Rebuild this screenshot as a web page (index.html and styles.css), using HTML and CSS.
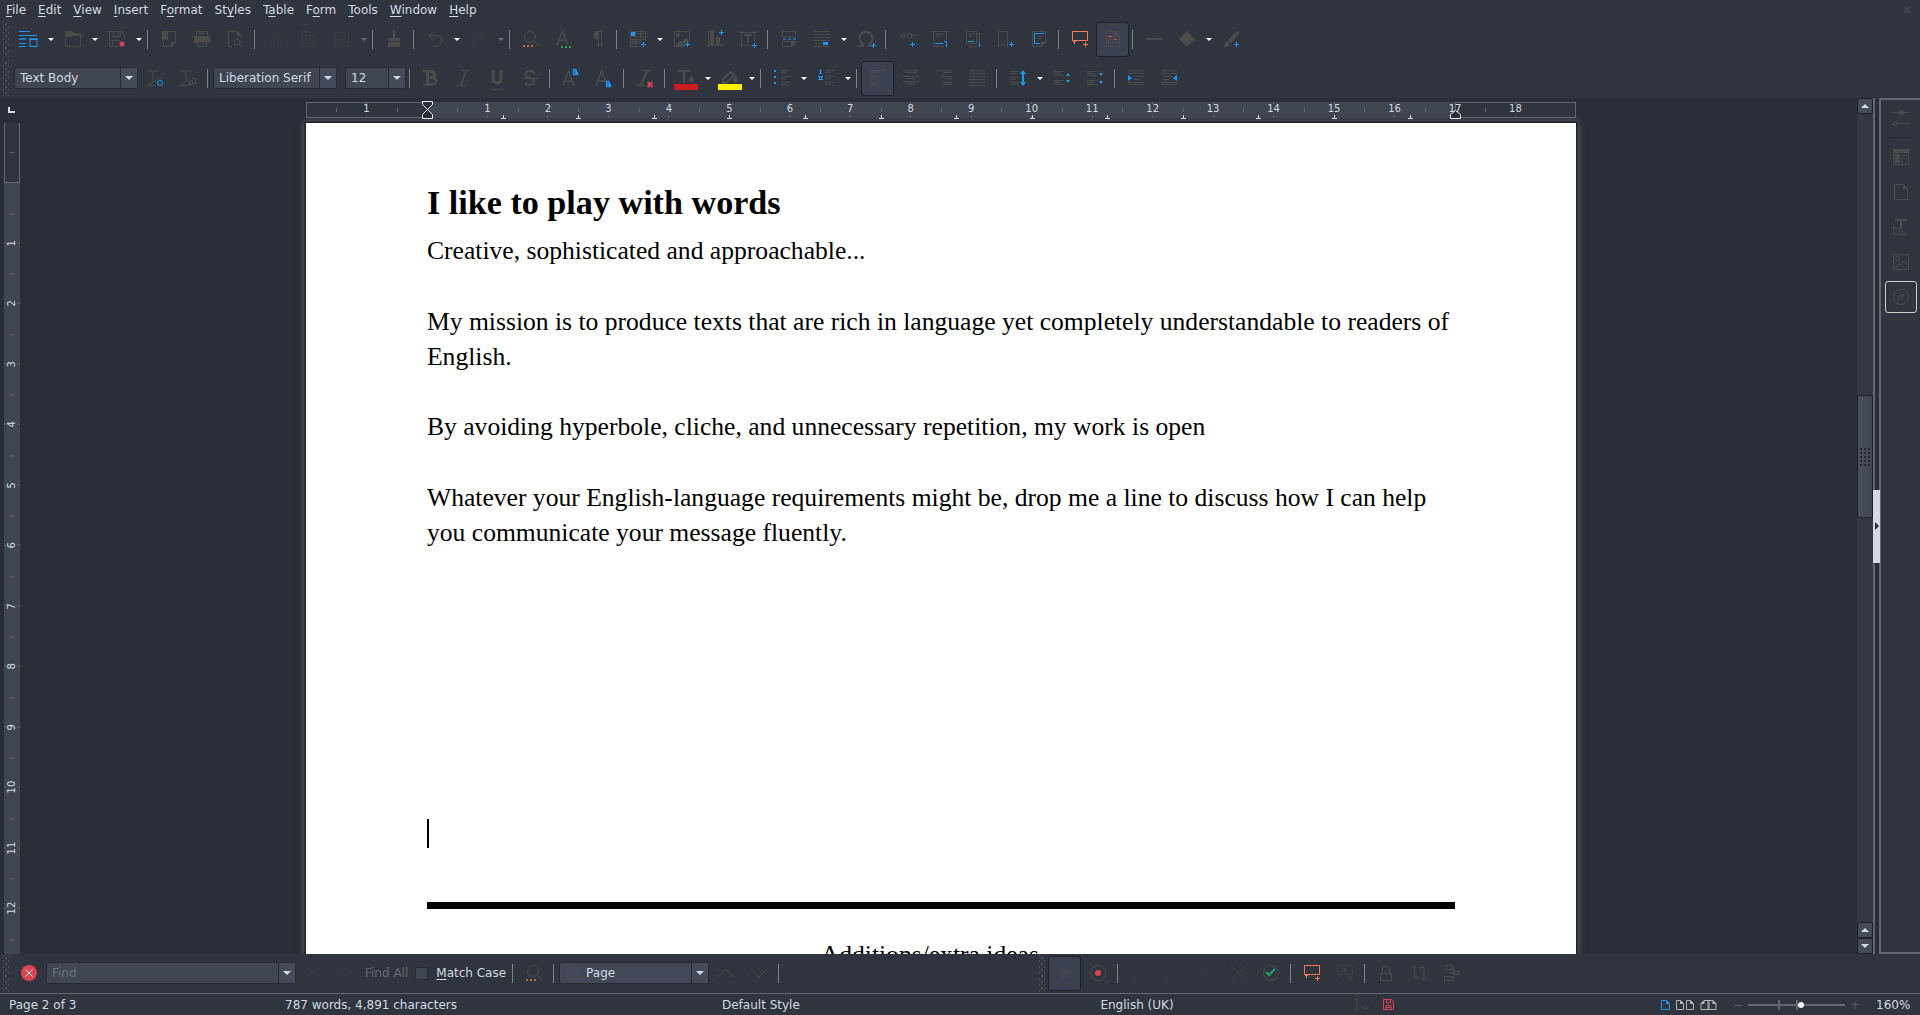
FILE: index.html
```html
<!DOCTYPE html>
<html lang="en-GB">
<head>
<meta charset="utf-8">
<title>Writer</title>
<link rel="stylesheet" href="styles.css">
</head>
<body>
<nav class="menubar">
  <button><u>F</u>ile</button><button><u>E</u>dit</button><button><u>V</u>iew</button><button><u>I</u>nsert</button><button>F<u>o</u>rmat</button><button>St<u>y</u>les</button><button>T<u>a</u>ble</button><button>F<u>o</u>rm</button><button><u>T</u>ools</button><button><u>W</u>indow</button><button><u>H</u>elp</button>
  <button class="close-doc" aria-label="Close document">×</button>
</nav>

<div class="toolbar">
  <i class="grip"></i>
  <button class="tb" aria-label="New"><svg class="wide b" viewBox="0 0 19 16"><path d="M0 .5h11M0 4.5h18M0 12.5h7M0 15.5h7M11 8.5h7v7h-7z"/><path stroke-width="2" opacity=".7" d="M0 8h7M10 8h9"/></svg></button><button class="dd" aria-label="New menu"></button>
  <button class="tb" aria-label="Open"><svg viewBox="0 0 16 16"><path d="M.5 15.5v-15h6l2 2h7v13z"/><path class="f" d="M0 0h7l2 2h7v3H7L5 6H0z"/></svg></button><button class="dd" aria-label="Open menu"></button>
  <button class="tb" aria-label="Save"><svg viewBox="0 0 16 16"><path d="M10 15.5H.5V.5h12l3 3V9M4.500 .5v5h7v-5M9.500 1v3M3.500 15V9.500h7"/><circle class="rf" cx="13" cy="13" r="2.500"/></svg></button><button class="dd" aria-label="Save menu"></button>
  <i class="sep"></i>
  <button class="tb" aria-label="Export as PDF"><svg viewBox="0 0 16 16"><path d="M5 .5h9.500v11l-4 4H2.500V12"/><path class="f" d="M1 0h6v10l-3-2-3 3zM10 11h5l-5 5z"/></svg></button>
  <button class="tb" aria-label="Print"><svg viewBox="0 0 16 16"><path d="M2.500 4V.5h11V4M5 2.500h6M3.500 10.500h9v5h-9zM6 12.500h5"/><path class="f" d="M0 5h16v7h-3v-2H3v2H0z"/></svg></button>
  <button class="tb" aria-label="Print preview"><svg viewBox="0 0 16 16"><path d="M5 15.500H1.500V.5h9l4 4V7"/><path class="f" d="M10 0l5 5h-5z"/><circle cx="10" cy="11" r="3"/><path d="M12 13l3 3"/></svg></button>
  <i class="sep"></i>
  <button class="tb dim" aria-label="Cut"><svg viewBox="0 0 16 16"><path d="M4 0l7 12M12 0L5 12"/><circle cx="4" cy="13.500" r="2"/><circle cx="12" cy="13.500" r="2"/></svg></button>
  <button class="tb dim" aria-label="Copy"><svg viewBox="0 0 16 16"><path d="M4 11.500H.5V.5h8V4M4.500 4.500h10v8l-3 3h-7z"/></svg></button>
  <button class="tb dim" aria-label="Paste"><svg viewBox="0 0 16 16"><path d="M3 2.500H1.500v13h13v-13H13M4.500 1.500h7v3h-7zM4 8.500h8M4 10.500h6M4 12.500h4"/></svg></button><button class="dd off" aria-label="Paste menu"></button>
  <i class="sep"></i>
  <button class="tb" aria-label="Clone formatting"><svg viewBox="0 0 16 16"><path class="f" d="M7 0h2v7h5v3H2V7h5zM2 11h12v5H0c2 0 2-3 2-5z"/></svg></button>
  <i class="sep"></i>
  <button class="tb" aria-label="Undo"><svg viewBox="0 0 16 16"><path d="M6 .5l-4 4 4 4M2 4.500h7a5.500 5.500 0 010 11H6"/></svg></button><button class="dd" aria-label="Undo menu"></button>
  <button class="tb dim" aria-label="Redo"><svg viewBox="0 0 16 16"><path d="M10 .5l4 4-4 4M14 4.500H7a5.500 5.500 0 000 11h3"/></svg></button><button class="dd off" aria-label="Redo menu"></button>
  <i class="sep"></i>
  <button class="tb" aria-label="Find and replace"><svg viewBox="0 0 16 16"><circle cx="7" cy="6" r="5.500"/><path d="M11 10l5 5"/><path class="o" stroke-width="2" stroke-dasharray="2 2" d="M0 15h10"/></svg></button>
  <button class="tb" aria-label="Spelling"><svg viewBox="0 0 16 16"><path stroke-width="1.500" d="M1 14L6.500 .5 12 14M3 9.500h7"/><path class="g" stroke-width="2" stroke-dasharray="2 2" d="M5 16h10"/></svg></button>
  <button class="tb" aria-label="Formatting marks"><svg viewBox="0 0 16 16"><path class="f" d="M8 0h5v16h-1V1h-2v15H9V9a4.500 4.500 0 010-9z"/></svg></button>
  <i class="sep"></i>
  <button class="tb" aria-label="Insert table"><svg viewBox="0 0 16 16"><path d="M11 15.500H.5V.5h15V10M0 5.500h15M0 10.500h12M5.500 0v15M10.500 0v10M6 2.500h10M1 12.500h9M0 8.500h16"/><path class="bf" d="M1 1h4v4H1z"/><path class="b" d="M13.500 11v5M11 13.500h5"/></svg></button><button class="dd" aria-label="Table menu"></button>
  <button class="tb" aria-label="Insert image"><svg viewBox="0 0 16 16"><path d="M10 15.500H.5V.5h15V10"/><circle class="f" cx="4" cy="4" r="2"/><path class="f" d="M1 15l5-5 2 1 4-4 3 3v1h-4v4z"/><path class="b" d="M13.500 11v5M11 13.500h5"/></svg></button>
  <button class="tb" aria-label="Insert chart"><svg viewBox="0 0 16 16"><path d="M0 14.500h16M1.500 0v16"/><path class="f" d="M3 0h4v14H3zM9 6h4v8H9z"/><path class="b" d="M14.500-1v5M12 1.500h5"/></svg></button>
  <button class="tb" aria-label="Insert text box"><svg viewBox="0 0 16 16"><path d="M0 1.500h16M1.500 0v16M14.500 0v10M0 14.500h10"/><path stroke-width="2" d="M4 4h8M8 4v8"/><path class="b" d="M14.500 12v5M12 14.500h5"/></svg></button>
  <i class="sep"></i>
  <button class="tb" aria-label="Page break"><svg viewBox="0 0 16 16"><path d="M1.500 0v5.500h13V.5h-13M1.500 15.500v-5h13v2l-3 3z"/><path class="f" d="M10 11h5l-5 5z"/><path class="b" stroke-dasharray="3 2" d="M2 8h13"/></svg></button>
  <button class="tb" aria-label="Insert field"><svg viewBox="0 0 16 16"><path d="M0 .5h16M0 3.500h16M0 6.500h16M0 9.500h16M0 12.500h8M0 15.500h16"/><path class="bf" d="M9 11h5v3H9z"/></svg></button><button class="dd" aria-label="Field menu"></button>
  <button class="tb" aria-label="Special character"><svg viewBox="0 0 16 16"><path stroke-width="2" d="M0 15h5v-2a6.500 6.500 0 116 0v2h2"/><path class="b" d="M15.500 12v5M13 14.500h5"/></svg></button>
  <i class="sep"></i>
  <button class="tb" aria-label="Hyperlink"><svg viewBox="0 0 16 16"><path d="M0 4.500h3M6 2.500H3.500v4H6M5 4.500h6M9 2.500h3.500v4H9M13 4.500h3"/><path class="b" d="M13.500 11v5M11 13.500h5"/></svg></button>
  <button class="tb" aria-label="Footnote"><svg viewBox="0 0 16 16"><path d="M12 15.500H1.500V.5h13V9M4 3.500h8M4 5.500h4M4 15h2"/><path class="b" d="M3 12.500h8M12 10.500h2.500V16"/></svg></button>
  <button class="tb" aria-label="Endnote"><svg viewBox="0 0 16 16"><path d="M1.500 .5h10v12h-10zM12 2.500h2.500V9M4 3.500h5M4 5.500h3M4 15.500h8"/><path class="b" d="M3 10.500h6M14.500 10v1M14.500 12v4"/></svg></button>
  <button class="tb" aria-label="Bookmark"><svg viewBox="0 0 16 16"><path d="M.5 15.500V.5h9v15L5 13z"/><path class="b" d="M13.500 11v5M11 13.500h5"/></svg></button>
  <button class="tb" aria-label="Cross-reference"><svg viewBox="0 0 16 16"><path d="M1.500 .5h13v11l-4 4h-9zM6 5.500h6M6 7.500h4"/><path class="b" d="M13 2.500H3.500v10H9"/><path class="f" d="M10 11h5l-5 5z"/></svg></button>
  <i class="sep"></i>
  <button class="tb" aria-label="Insert comment"><svg viewBox="0 0 16 16"><path class="o2" d="M.5 .5h15v9h-15zM2.500 10v3M1 10.500h3M13.500 11v5M11 13.500h5"/></svg></button>
  <button class="tb on" aria-label="Track changes"><svg viewBox="0 0 16 16"><path d="M1.500 .5h9l4 4v11h-13zM4 8.500h5M7 11.500h5"/><path class="f" d="M9 0l6 5H9z"/><path class="r" d="M3 5.500h4M9 8.500h3M3 11.500h1"/></svg></button>
  <i class="sep"></i>
  <button class="tb" aria-label="Line"><svg viewBox="0 0 16 16"><path stroke-width="2" d="M0 8h16"/></svg></button>
  <button class="tb" aria-label="Basic shapes"><svg viewBox="0 0 16 16"><path class="f" d="M8 0l8 8-8 8-8-8z"/></svg></button><button class="dd" aria-label="Shapes menu"></button>
  <button class="tb" aria-label="Show draw functions"><svg viewBox="0 0 16 16"><path class="f" d="M16 0v3l-8 9-3-3 8-8zM4 10l3 3c-1 3-4 3-7 3 2-1 1-5 4-6z"/><path class="b" d="M13.500 11v5M11 13.500h5"/></svg></button>
</div>

<div class="toolbar">
  <i class="grip"></i>
  <span class="combo style"><select aria-label="Paragraph style"><option>Text Body</option></select></span>
  <button class="tb" aria-label="Update style"><svg viewBox="0 0 16 16"><path d="M0 1h12M6 1v10M0 15.500h9M1 15L15 7"/><circle class="b" cx="13" cy="13" r="2.500"/></svg></button>
  <button class="tb" aria-label="New style"><svg viewBox="0 0 16 16"><path d="M0 1h12M6 1v10M0 15.500h9M1 15l8-6M9.500 10.500h3v4h-3zM12 8.500h3.500v5H13"/></svg></button>
  <i class="sep"></i>
  <span class="combo font"><select aria-label="Font name"><option>Liberation Serif</option></select></span>
  <span class="combo size"><select aria-label="Font size"><option>12</option></select></span>
  <i class="sep"></i>
  <button class="tb" aria-label="Bold"><svg viewBox="0 0 16 16"><path stroke-width="3" d="M4 1.500h4.500a2.800 2.800 0 010 6H5h4.500a3.300 3.300 0 010 7H4M4.500 1v13"/><path stroke-width="2" d="M0 1h5M0 15h5"/></svg></button>
  <button class="tb" aria-label="Italic"><svg viewBox="0 0 16 16"><path d="M6 .5h8M1 15.500h8"/><path stroke-width="1.500" d="M10 1L5 15"/></svg></button>
  <button class="tb" aria-label="Underline"><svg viewBox="0 0 16 16"><path stroke-width="3" d="M4 0v8q0 5 4 5t4-5V0"/><path d="M1 19.500h14"/></svg></button>
  <button class="tb" aria-label="Strikethrough"><svg viewBox="0 0 16 16"><path stroke-width="2" d="M12 4V2Q8 0 5 2T5 7l6 2q2 2 0 5-4 2-7 0v-2"/><path d="M0 8.500h16"/></svg></button>
  <i class="sep"></i>
  <button class="tb" aria-label="Superscript"><svg viewBox="0 0 16 16"><path stroke-width="1.500" d="M0 15.500L5.500 1 11 15.500M2 11h7"/><path class="b" d="M10.500-.5H13v5h-2.500zM13 2.500h1.500v2H13M10 2h4" stroke-width="1.300"/></svg></button>
  <button class="tb" aria-label="Subscript"><svg viewBox="0 0 16 16"><path stroke-width="1.500" d="M0 15.500L5.500 1 10 12M2 11h7"/><path class="b" d="M10.500 11.500H13v5h-2.500zM13 14.500h1.500v2H13M10 14h4" stroke-width="1.300"/></svg></button>
  <i class="sep"></i>
  <button class="tb" aria-label="Clear formatting"><svg viewBox="0 0 16 16"><path d="M4 .5h10M0 15.500h8"/><path stroke-width="2" d="M10 1L4 15"/><path class="r" stroke-width="2" d="M10.500 12l5 5M15.500 12l-5 5"/></svg></button>
  <i class="sep"></i>
  <button class="tb" aria-label="Font colour"><svg class="tall" viewBox="0 0 24 20"><path stroke-width="2" d="M4 1h12M10 1v12"/><path class="f" d="M17.500 5l2.500 5a2.500 2.500 0 11-5 0z"/><path fill="#cc1a1f" stroke="none" d="M0 14h24v6H0z"/></svg></button><button class="dd" aria-label="Font colour menu"></button>
  <button class="tb" aria-label="Highlighting"><svg class="tall" viewBox="0 0 24 20"><path stroke-width="2" d="M5 9l8-7 3 3-8 8H5z"/><path class="f" d="M17.500 5l2.500 5a2.500 2.500 0 11-5 0z"/><path fill="#fff200" stroke="none" d="M0 14h24v6H0z"/></svg></button><button class="dd" aria-label="Highlighting menu"></button>
  <i class="sep"></i>
  <button class="tb" aria-label="Bullets"><svg viewBox="0 0 16 16"><path d="M7 .5h9M7 2.500h6M7 6.500h9M7 8.500h5M7 12.500h9M7 14.500h6M14 15.500h2"/><path class="bf" d="M0 0h2v2H0zM0 6h2v2H0zM0 12h2v2H0z"/></svg></button><button class="dd" aria-label="Bullets menu"></button>
  <button class="tb" aria-label="Numbering"><svg viewBox="0 0 16 16"><path d="M7 .5h9M7 2.500h6M7 6.500h9M7 8.500h5M7 12.500h9M7 14.500h6M14 15.500h2"/><path class="b" d="M1 .5h3M2.500 0v4M1 3.500h3M0 6.500h5M1.500 6v4M3.500 6v4M0 9.500h5"/></svg></button><button class="dd" aria-label="Numbering menu"></button>
  <i class="sep"></i>
  <button class="tb on" aria-label="Align left"><svg viewBox="0 0 16 16"><path d="M0 .5h16M0 2.500h9M0 6.500h10M0 8.500h6M0 12.500h10M0 14.500h7M8 15.500h2"/></svg></button>
  <button class="tb" aria-label="Centre"><svg viewBox="0 0 16 16"><path d="M0 .5h16M2 2.500h12M0 6.500h16M4 8.500h8M0 11.500h16M4 13.500h8M7 15.500h2"/></svg></button>
  <button class="tb" aria-label="Align right"><svg viewBox="0 0 16 16"><path d="M0 .5h16M7 2.500h9M6 6.500h10M10 8.500h6M6 12.500h10M9 14.500h7M7 15.500h2"/></svg></button>
  <button class="tb" aria-label="Justify"><svg viewBox="0 0 16 16"><path d="M0 .5h16M0 3.500h16M0 6.500h16M0 9.500h16M0 12.500h16M0 15.500h16"/></svg></button>
  <i class="sep"></i>
  <button class="tb" aria-label="Line spacing"><svg viewBox="0 0 16 16"><path d="M0 1.500h9M0 3.500h7M0 7.500h9M0 9.500h6M0 12.500h9M0 14.500h7"/><path class="bf" d="M13 0l3 4h-2v8h2l-3 4-3-4h2V4h-2z"/></svg></button><button class="dd" aria-label="Line spacing menu"></button>
  <button class="tb" aria-label="Increase paragraph spacing"><svg viewBox="0 0 16 16"><path d="M0 1.500h10M0 3.500h7M0 5.500h10M0 10.500h10M0 12.500h7M0 14.500h11"/><path class="bf" d="M14 3l2 3h-4zM12 10h4l-2 3z"/></svg></button>
  <button class="tb" aria-label="Decrease paragraph spacing"><svg viewBox="0 0 16 16"><path d="M0 1.500h10M0 3.500h7M0 5.500h10M0 10.500h10M0 12.500h7M0 14.500h11"/><path class="bf" d="M12 3h4l-2 3zM14 10l2 3h-4z"/></svg></button>
  <i class="sep"></i>
  <button class="tb" aria-label="Increase indent"><svg viewBox="0 0 16 16"><path d="M0 .5h16M0 3.500h16M6 6.500h10M6 9.500h6M0 12.500h16M0 14.500h16"/><path class="bf" d="M0 5l4 3-4 3z"/></svg></button>
  <button class="tb" aria-label="Decrease indent"><svg viewBox="0 0 16 16"><path d="M0 .5h16M0 3.500h16M2 6.500h10M2 9.500h6M0 12.500h16M0 14.500h16"/><path class="bf" d="M16 5l-4 3 4 3z"/></svg></button>
</div>

<main class="workspace">
  <div class="left">
    <i class="corner"></i>
    <div class="vruler"><div class="vmargin"></div>
      <ol class="vmarks"><li>1</li><li>2</li><li>3</li><li>4</li><li>5</li><li>6</li><li>7</li><li>8</li><li>9</li><li>10</li><li>11</li><li>12</li><li></li></ol>
    </div>
  </div>
  <section class="desk">
    <div class="hruler">
      <i class="hmargin"></i><i class="hbody"></i><i class="hmargin end"></i>
      <ol class="hmarks"><li>1</li><li class="zero"></li><li>1</li><li>2</li><li>3</li><li>4</li><li>5</li><li>6</li><li>7</li><li>8</li><li>9</li><li>10</li><li>11</li><li>12</li><li>13</li><li>14</li><li>15</li><li>16</li><li>17</li><li>18</li></ol>
      <div class="tabs"><i></i><i></i><i></i><i></i><i></i><i></i><i></i><i></i><i></i><i></i><i></i><i></i><i></i></div>
      <svg class="indent first" viewBox="0 0 11 18"><path d="M.5 .5h10v3l-5 5 5 5v4H.5v-4l5-5-5-5z"/></svg>
      <svg class="indent last" viewBox="0 0 11 18"><path d="M5.500 9.500l5 4v4H.5v-4z"/></svg>
    </div>
    <article class="page">
      <h1>I like to play with words</h1>
      <p>Creative, sophisticated and approachable...</p>
      <p>My mission is to produce texts that are rich in language yet completely understandable to readers of English.</p>
      <p>By avoiding hyperbole, cliche, and unnecessary repetition, my work is open</p>
      <p>Whatever your English-language requirements might be, drop me a line to discuss how I can help you communicate your message fluently.</p>
      <div class="caret"></div>
      <hr>
      <p class="ideas">Additions/extra ideas</p>
    </article>
  </section>
  <div class="scrollbar">
    <button class="up" aria-label="Scroll up"></button>
    <div class="track"><i class="before"></i><i class="thumb"></i><i class="after"></i></div>
    <button class="up" aria-label="Previous"></button>
    <button class="down" aria-label="Next"></button>
  </div>
  <div class="splitter"><button aria-label="Hide sidebar"></button></div>
  <aside class="sidebar">
    <button aria-label="Sidebar settings"><svg viewBox="0 0 16 16"><path d="M0 2.500h16M5 13.500h11"/><circle class="f" cx="8.500" cy="2.500" r="2.500"/><circle cx="2.500" cy="13.500" r="2"/></svg></button>
    <i class="rule"></i>
    <button aria-label="Properties"><svg viewBox="0 0 16 16"><path d="M.5 .5h15v15H.5zM8 6.500h6M8 9.500h4M8 12.500h2"/><path class="f" d="M0 0h16v4H0zM2 5h5v9H2z"/></svg></button>
    <button aria-label="Page"><svg viewBox="0 0 16 16"><path d="M1.500 .5h9l4 4v11h-13z"/><path class="f" d="M10 0l5 5h-5z"/></svg></button>
    <button aria-label="Styles"><svg viewBox="0 0 16 16"><path stroke-width="2" d="M2 1h12M8 1v9"/><path d="M.5 7.500v8H14z"/></svg></button>
    <button aria-label="Gallery"><svg viewBox="0 0 16 16"><path d="M.5 .5h15v15H.5zM2 14l4-4 2 1 3-4 3 3"/><circle cx="4.500" cy="4.500" r="2"/></svg></button>
    <button class="focus" aria-label="Navigator"><svg viewBox="0 0 16 16"><circle cx="8" cy="8" r="7.500"/><path d="M11 5L9.500 9.500 5 11l1.500-4.500z"/></svg></button>
  </aside>
</main>

<div class="toolbar findbar">
  <i class="grip"></i>
  <button class="close-find" aria-label="Close find bar"><svg viewBox="0 0 16 16"><circle cx="8" cy="8" r="8" fill="#da4453" stroke="none"/><path stroke="#fff" d="M4.500 4.500l7 7M11.500 4.500l-7 7"/></svg></button>
  <span class="combo find"><input type="text" placeholder="Find" aria-label="Find"></span>
  <button class="tb dim" aria-label="Find previous"><svg viewBox="0 0 16 16"><path d="M2 11l6-6 6 6"/></svg></button>
  <button class="tb dim" aria-label="Find next"><svg viewBox="0 0 16 16"><path d="M2 5l6 6 6-6"/></svg></button>
  <button class="findall" disabled>Find All</button>
  <label class="match"><input type="checkbox"><span><u>M</u>atch Case</span></label>
  <i class="sep"></i>
  <button class="tb" aria-label="Find and replace"><svg viewBox="0 0 16 16"><circle cx="7" cy="6" r="5.500"/><path d="M11 10l5 5"/><path class="o" stroke-width="2" stroke-dasharray="2 2" d="M0 15h10"/></svg></button>
  <i class="sep"></i>
  <span class="combo nav"><svg viewBox="0 0 16 16"><path d="M3.500 2.500h6l3 3v8h-9z"/></svg><select aria-label="Navigate by"><option>Page</option></select></span>
  <button class="tb" aria-label="Previous page"><svg viewBox="0 0 16 16"><path d="M0 12l8-8 8 8"/></svg></button>
  <button class="tb" aria-label="Next page"><svg viewBox="0 0 16 16"><path d="M0 4l8 8 8-8"/></svg></button>
  <i class="sep"></i>
  <div class="changes">
    <i class="grip"></i>
    <button class="tb on" aria-label="Show changes"><svg viewBox="0 0 16 16"><path d="M0 9q8-9 16 0"/><circle cx="8" cy="9" r="3.500"/><circle cx="8" cy="9" r="1"/></svg></button>
    <button class="tb" aria-label="Record changes"><svg viewBox="0 0 16 16"><circle cx="8" cy="8" r="7.500"/><circle class="rf" cx="8" cy="8" r="3"/></svg></button>
    <i class="sep"></i>
    <button class="tb dim" aria-label="Previous change"><svg viewBox="0 0 16 16"><path d="M5 2L2 5M2 11l3 3"/></svg></button>
    <button class="tb dim" aria-label="Next change"><svg viewBox="0 0 16 16"><path d="M1 2l3 3M4 11l-3 3"/></svg></button>
    <button class="tb dim" aria-label="Accept change"><svg viewBox="0 0 16 16"><path d="M3 13l10-10"/></svg></button>
    <button class="tb off" aria-label="Reject change"><svg viewBox="0 0 16 16"><path d="M1 1l14 14M15 1L1 15"/></svg></button>
    <button class="tb" aria-label="Manage changes"><svg viewBox="0 0 16 16"><circle cx="8" cy="8" r="7.500"/><path class="g" stroke-width="2" d="M3 7l3 3 6-6"/></svg></button>
    <i class="sep"></i>
    <button class="tb" aria-label="Insert comment"><svg viewBox="0 0 16 16"><path class="o2" d="M.5 .5h15v9h-15zM2.500 10v3M1 10.500h3M13.500 11v5M11 13.500h5"/></svg></button>
    <button class="tb off" aria-label="Comment on change"><svg viewBox="0 0 16 16"><path d="M.5 .5h15v9h-15zM2.500 10v3M13.500 11v5M11 13.500h5"/><circle class="f" cx="8" cy="5" r="2"/></svg></button>
    <i class="sep"></i>
    <button class="tb" aria-label="Protect changes"><svg viewBox="0 0 16 16"><path d="M2.500 8.500h11v7h-11zM4.500 8V4q0-3 3.500-3t3.500 3v4"/></svg></button>
    <button class="tb" aria-label="Compare document"><svg viewBox="0 0 16 16"><circle cx="3.500" cy="2" r="1.500"/><circle cx="13" cy="14" r="1.500"/><path d="M3.500 4v9h4M6 11l2 2-2 2M13 12V2.500H9M11 .5l-2 2 2 2"/></svg></button>
    <button class="tb" aria-label="Merge document"><svg viewBox="0 0 16 16"><path d="M.5 .5h8v4h-8M.5 11.500h8v4h-8zM9 2.500h1v11H9M5 8h5M9.500 6.500h6v3h-6z"/></svg></button>
  </div>
</div>

<footer class="status">
  <span>Page 2 of 3</span>
  <span>787 words, 4,891 characters</span>
  <span>Default Style</span>
  <span class="mid">English (UK)</span>
  <span></span>
  <span class="icon"><svg viewBox="0 0 16 12"><path d="M0 .5h5M2.500 0v11M0 11.500h5M8.500 8v2.500h6V8"/></svg></span>
  <span class="icon"><svg viewBox="0 0 11 11"><path class="r" d="M.5 .5h8l2 2v8H.5zM3.500 1v3h4V1M3 10V6.500h5V10M3 8.500h5"/></svg></span>
  <span></span>
  <span></span>
  <span class="views">
    <svg viewBox="0 0 9 10"><path class="b" d="M.5 .5h5l3 3v6h-8z"/><path class="bf" d="M5 0l4 4H5z"/></svg>
    <svg class="two" viewBox="0 0 18 10"><path d="M.5 .5h4l3 3v6h-7zM10.500 .5h4l3 3v6h-7z"/><path class="lf" d="M4 0l4 4H4zM14 0l4 4h-4z"/></svg>
    <svg class="two" viewBox="0 0 17 10"><path d="M3.500 .5L.5 3.500v6h15v-6l-3-3zM7.500 0v10M8.500 0v10"/><path class="lf" d="M4 0v4H0zM12 0l4 4h-4z"/></svg>
  </span>
  <span class="zoomctl"><button aria-label="Zoom out">−</button><input type="range" min="0" max="100" value="55" aria-label="Zoom"><button aria-label="Zoom in">+</button></span>
  <span>160%</span>
</footer>
</body>
</html>
```
FILE: styles.css
```css
:root {
  --bg: #2f343f;
  --desk: #292d37;
  --field: #404552;
  --edge: #252932;
  --line: #626771;
  --text: #d3dae3;
  --icon: #4b4b4a;
  --blue: #1e97ef;
}

* { box-sizing: border-box; }

body {
  margin: 0;
  height: 100vh;
  display: flex;
  flex-direction: column;
  overflow: hidden;
  background: var(--bg);
  color: var(--text);
  font: 12px/16px "DejaVu Sans", sans-serif;
}

button, input, select {
  font: inherit;
  color: inherit;
  background: none;
  border: 0;
  padding: 0;
  margin: 0;
  outline: 0;
}

ol { list-style: none; margin: 0; padding: 0; }
i { display: block; flex: none; }
u { text-underline-offset: 2px; }

svg {
  display: block;
  flex: none;
  width: 16px;
  height: 16px;
  overflow: visible;
  fill: none;
  stroke: var(--icon);
}
svg.wide { width: 19px; }
svg.tall { width: 24px; height: 20px; margin-top: 4px; }
svg.b, svg .b { stroke: var(--blue); }
svg .f { fill: var(--icon); stroke: none; }
svg .bf { fill: var(--blue); stroke: none; }
svg .rf { fill: #da4453; stroke: none; }
svg .lf { fill: #b4b4b3; stroke: none; }
svg .r { stroke: #da4453; }
svg .o { stroke: #c0634c; }
svg .o2 { stroke: #f67b52; }
svg .g { stroke: #27a35d; }

/* menus */
.menubar { display: flex; gap: 12px; height: 20px; padding-left: 6px; flex: none; align-items: center; }
.menubar .close-doc { margin-left: auto; padding-right: 8px; color: #484c56; }

/* toolbars */
.toolbar { display: flex; align-items: center; height: 39px; padding: 0 0 1px 3px; flex: none; }
.grip {
  width: 6px;
  height: 36px;
  margin-right: 3px;
  background:
    radial-gradient(circle, #4b505b 1px, transparent 1px) 0 0 / 6px 6px,
    radial-gradient(circle, #4b505b 1px, transparent 1px) 3px 3px / 6px 6px;
}
.tb { display: flex; align-items: center; justify-content: center; flex: none; width: 33px; height: 35px; }
.tb.dim svg { opacity: .3; }
.tb.off svg { opacity: .6; }
.tb.on { border: 1px solid #1d2027; border-radius: 3px; background: #3b4150; }
.dd { display: grid; place-items: center; flex: none; width: 11px; height: 35px; }
.dd::after { content: ""; border: 3px solid transparent; border-top-color: #fff; border-bottom: 0; }
.dd.off::after { border-top-color: #686c75; }
.sep { width: 1px; height: 19px; margin: 0 4px 0 3px; background: #7d8189; }

.combo {
  display: flex;
  align-items: center;
  flex: none;
  position: relative;
  height: 22px;
  border: 1px solid var(--edge);
  border-radius: 3px;
  background: var(--field);
}
.combo select, .combo input { appearance: none; flex: 1; min-width: 0; height: 20px; padding: 0 20px 0 5px; }
.combo::after {
  content: "";
  position: absolute;
  inset: 0 0 0 auto;
  width: 16px;
  border-left: 1px solid var(--edge);
  background: #444a5a;
  pointer-events: none;
}
.combo::before {
  content: "";
  position: absolute;
  right: 4px;
  top: 8px;
  z-index: 1;
  border: 4px solid transparent;
  border-top-color: var(--text);
  border-bottom: 0;
  pointer-events: none;
}
.combo.style { width: 124px; margin-left: 2px; }
.combo.font { width: 124px; margin: 0 8px 0 1px; }
.combo.size { width: 61px; }
.combo.find { width: 250px; margin-left: 9px; }
.combo.find input::placeholder { color: #6c717b; opacity: 1; }
.combo.nav { width: 150px; padding-left: 4px; background: #424857; margin-left: 1px; }
.combo.nav select { padding-left: 6px; }

/* workspace */
.workspace { flex: 1; min-height: 0; display: flex; background: var(--desk); }
.left { width: 25px; flex: none; display: flex; flex-direction: column; padding-left: 4px; }
.corner { width: 7px; height: 6px; border: solid var(--text); border-width: 0 0 2px 2px; margin: 9px 4px 10px; }
.vruler { flex: 1; min-height: 0; overflow: hidden; width: 16px; background: var(--field); }
.vmargin {
  height: 60px;
  border: 1px solid var(--line);
  border-top: 0;
  background: linear-gradient(var(--line), var(--line)) 50% 29px / 4px 1px no-repeat, var(--bg);
}
.vmarks { height: 786px; margin-top: 30px; display: grid; grid-template-rows: repeat(13, 1fr); }
.vmarks li {
  display: flex;
  align-items: center;
  justify-content: center;
  writing-mode: vertical-rl;
  transform: rotate(180deg);
  font-size: 10px;
  line-height: 16px;
  background:
    linear-gradient(var(--line), var(--line)) 0 50% / 2px 1px no-repeat,
    linear-gradient(var(--line), var(--line)) 100% 50% / 2px 1px no-repeat,
    linear-gradient(var(--line), var(--line)) 50% 100% / 4px 1px no-repeat;
}

.desk { flex: 1; min-width: 0; display: flex; flex-direction: column; align-items: center; overflow: hidden; }
.hruler { position: relative; flex: none; display: flex; width: calc(21cm * 1.6); height: 16px; margin: 4px 0 5px; }
.hmargin { width: calc(2cm * 1.6); border: 1px solid var(--line); border-right: 0; background: var(--bg); }
.hmargin.end { border: 1px solid var(--line); }
.hbody { flex: 1; background: var(--field); }
.hmarks {
  position: absolute;
  inset: 0;
  display: grid;
  grid-template-columns: repeat(20, 1fr);
  padding: 0 calc(100% / 42);
  font-size: 10px;
  line-height: 14px;
  text-align: center;
}
.hmarks li {
  background:
    linear-gradient(var(--line), var(--line)) 50% 0 / 1px 2px no-repeat,
    linear-gradient(var(--line), var(--line)) 50% 100% / 1px 2px no-repeat,
    linear-gradient(var(--line), var(--line)) 0 50% / 1px 4px no-repeat;
}
.tabs {
  position: absolute;
  bottom: -1px;
  left: calc(2cm * 1.6);
  width: calc(16.25cm * 1.6);
  display: grid;
  grid-template-columns: repeat(13, 1fr);
}
.tabs i {
  justify-self: end;
  width: 5px;
  height: 4px;
  margin-right: -3px;
  background:
    linear-gradient(var(--text), var(--text)) 50% 0 / 1px 4px no-repeat,
    linear-gradient(var(--text), var(--text)) 0 100% / 5px 1px no-repeat;
}
.indent { position: absolute; top: -1px; width: 11px; height: 18px; stroke: #e6ebf2; fill: var(--desk); }
.indent.first { left: calc(2cm * 1.6 - 5px); }
.indent.last { right: calc(2cm * 1.6 - 6px); }

/* A4 sheet shown at 160% */
.page {
  zoom: 1.6;
  flex: 1;
  min-height: 0;
  width: 21cm;
  padding: 38px 2cm 0;
  background: #fff;
  color: #000;
  box-shadow: 0 0 0 1px #1f2228, 0 0 4px 1px #60646c;
  font: 12pt/22px "Liberation Serif", serif;
}
.page h1 { margin: 0 0 7px; font-size: 16pt; line-height: 24px; }
.page p { margin: 0 0 22px; }
.caret { width: 1px; height: 18px; margin-top: 168px; background: #000; }
.page hr { height: 4px; margin: 34px 0 18px; border: 0; background: #000; }
.page .ideas { padding-right: 14px; text-align: center; white-space: nowrap; }

.scrollbar { width: 16px; flex: none; display: flex; flex-direction: column; }
.scrollbar button {
  display: grid;
  place-items: center;
  height: 16px;
  border: 1px solid #1d2027;
  border-radius: 2px;
  background: #444a5a;
}
.scrollbar button::after { content: ""; border: 4px solid transparent; }
.scrollbar .up::after { border-bottom-color: var(--text); border-top: 0; }
.scrollbar .down::after { border-top-color: var(--text); border-bottom: 0; }
.track {
  flex: 1;
  display: flex;
  flex-direction: column;
  background: repeating-conic-gradient(#3a3e48 0 25%, #2d313b 0 50%) 0 0 / 2px 2px;
}
.before { flex: 282; }
.after { flex: 405; }
.thumb {
  flex: 121;
  border: 1px solid #1d2027;
  background: linear-gradient(90deg, #484e5e, #3f4554);
  position: relative;
}
.thumb::after {
  content: "";
  position: absolute;
  left: 2px;
  right: 1px;
  top: calc(50% - 9px);
  height: 20px;
  background: conic-gradient(from 270deg, #252932 25%, transparent 0) 0 0 / 4px 4px;
}
.splitter {
  width: 8px;
  flex: none;
  display: flex;
  align-items: center;
  border: solid var(--line);
  border-width: 0 2px;
  background: var(--desk);
}
.splitter button {
  display: grid;
  place-items: center;
  flex: none;
  width: 7px;
  height: 73px;
  margin-left: -2px;
  background: var(--text);
}
.splitter button::after { content: ""; border: 4px solid transparent; border-left-color: #2b2f39; border-right: 0; }
.sidebar {
  width: 39px;
  flex: none;
  display: flex;
  flex-direction: column;
  align-items: center;
  gap: 3px;
  padding-top: 2px;
  border: solid var(--line);
  border-width: 2px 0;
  background: var(--bg);
}
.sidebar button { display: grid; place-items: center; width: 32px; height: 32px; }
.sidebar .focus { border: 1px solid #c9cbcc; border-radius: 3px; }
.sidebar .rule { width: 23px; height: 1px; background: #1f222a; }

/* find bar */
.close-find { margin-left: 9px; }
.findall { color: #646973; margin-left: 3px; }
.match { display: flex; align-items: center; gap: 8px; margin: 0 3px 0 7px; }
.match input { appearance: none; width: 13px; height: 13px; border: 1px solid var(--edge); border-radius: 2px; background: var(--field); }
.changes { display: flex; align-items: center; margin-left: auto; padding-right: 452px; }

/* status bar */
.status {
  display: grid;
  grid-template-columns: 276fr 437fr 284fr 280fr 68px 29px 29px 30px 215fr 76px 143px 53px;
  flex: none;
  height: 22px;
  border-top: 1px solid var(--line);
  align-items: center;
  white-space: nowrap;
}
.status span { padding-left: 9px; }
.status .mid { padding: 0; text-align: center; }
.status .icon svg { height: 11px; }
.status .icon svg[viewBox="0 0 11 11"] { width: 11px; }
.status .views { display: flex; gap: 6px; padding-left: 13px; }
.views svg { width: 9px; height: 10px; stroke: #b4b4b3; }
.views .two { width: 18px; }
.zoomctl { display: flex; align-items: center; gap: 5px; color: #565b65; }
.zoomctl input {
  appearance: none;
  width: 97px;
  height: 12px;
  background:
    linear-gradient(var(--line), var(--line)) 0 50% / 100% 2px no-repeat,
    linear-gradient(var(--line), var(--line)) 30px 50% / 2px 10px no-repeat,
    linear-gradient(var(--line), var(--line)) 48px 50% / 2px 10px no-repeat;
}
.zoomctl input::-webkit-slider-thumb { appearance: none; width: 6px; height: 6px; border-radius: 50%; background: #f2f2f2; }
```
